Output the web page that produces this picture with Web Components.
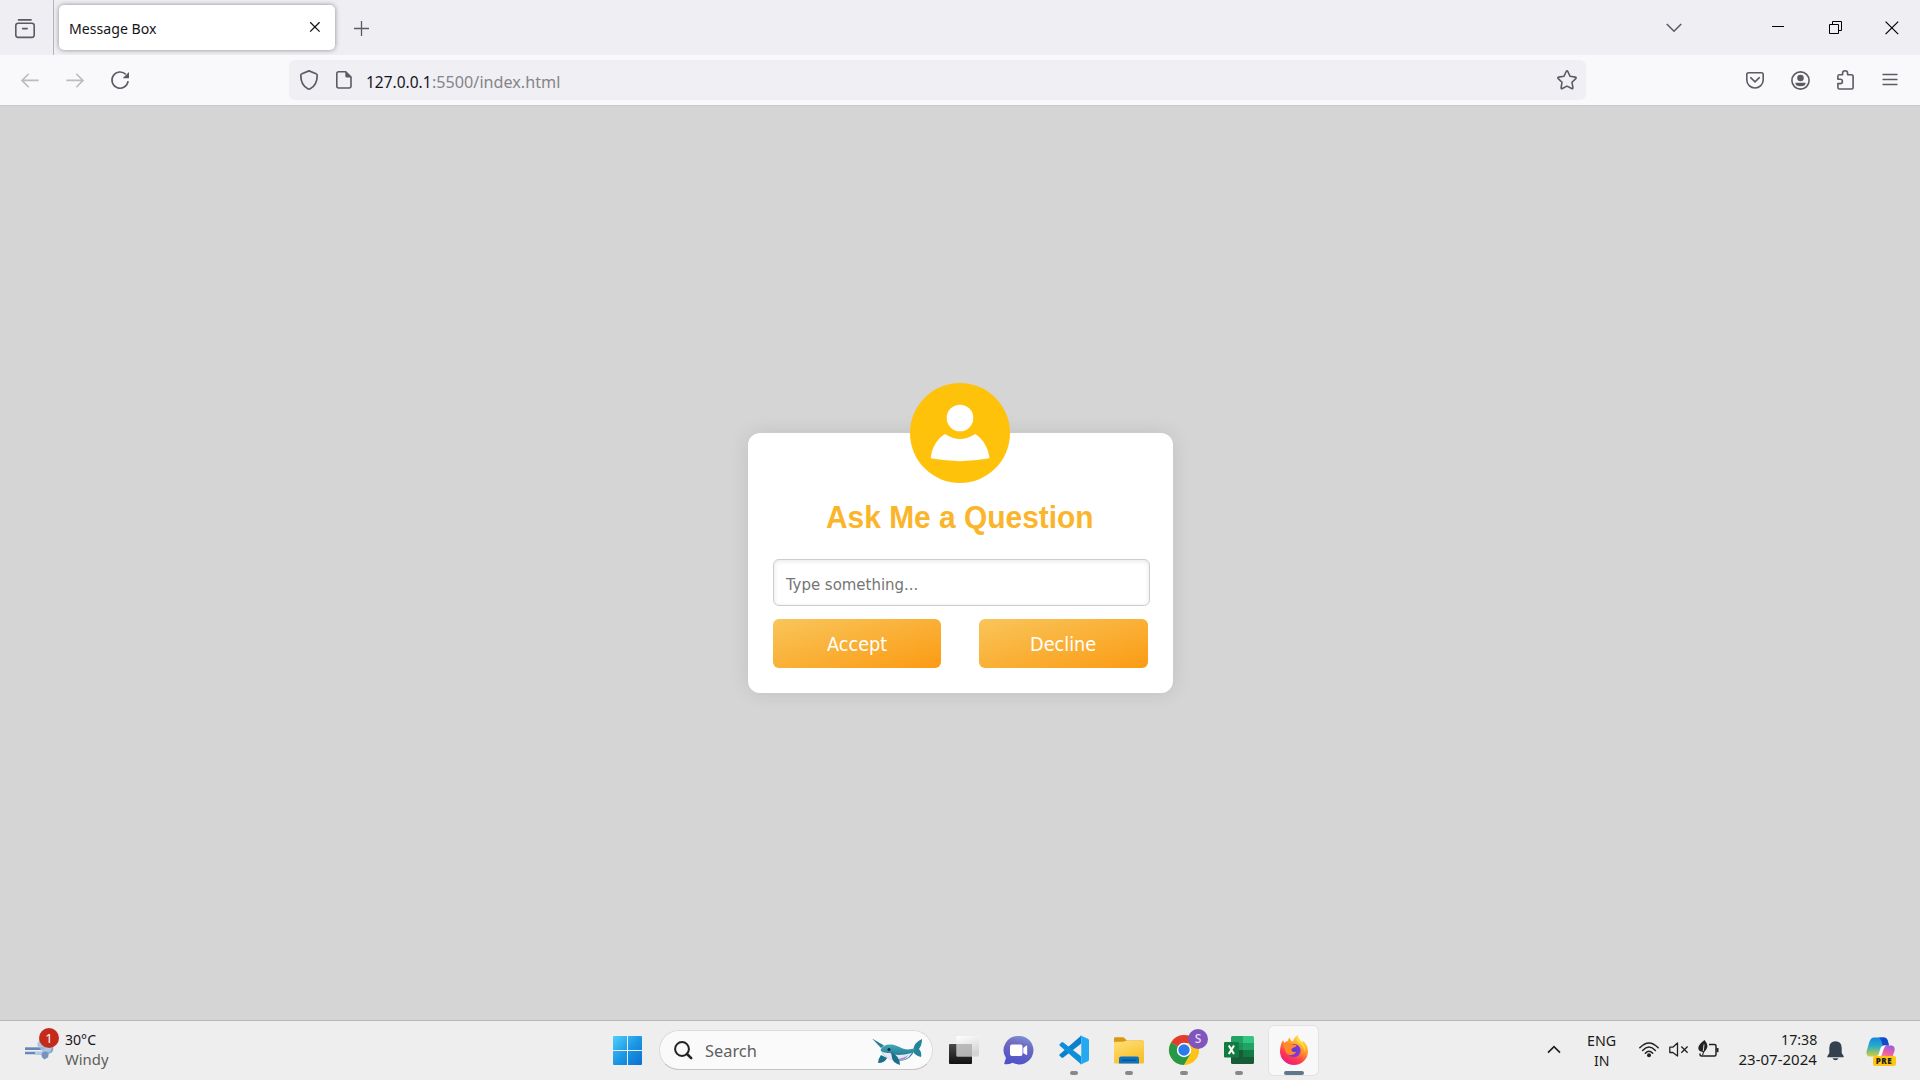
<!DOCTYPE html>
<html lang="en">
<head>
<meta charset="utf-8">
<title>Message Box</title>
<style>
html,body{margin:0;height:100%;overflow:hidden}
body{font-family:"Noto Sans",sans-serif;color:#15141a;background:#d5d5d5}
</style>
</head>
<body>
<desktop-screen></desktop-screen>
<script>
// name: [width, height, svg body]
const ICONS = {
  library:[20,20,'<g fill="none" stroke="#5b5b66" stroke-width="1.6" stroke-linecap="round"><path d="M3.5 .9h12.6"/><rect x=".8" y="4.2" width="18.4" height="14.2" rx="2.3"/><path d="M7.6 9.6h4.6"/></g>'],
  x:[12,12,'<path d="M1.2 1.2l9.4 9.4M10.6 1.2L1.2 10.6" stroke="#15141a" stroke-width="1.3" fill="none"/>'],
  plus:[15,15,'<path d="M7.5 0v15M0 7.5h15" stroke="#5b5b66" stroke-width="1.3"/>'],
  chevron:[16,10,'<path d="M.8 1l7.2 7.2L15.2 1" fill="none" stroke="#5b5b66" stroke-width="1.6"/>'],
  minimise:[12,2,'<path d="M0 .5h12" stroke="#000"/>'],
  restore:[13,13,'<path d="M.5 3.5h9v9h-9zM3.5 3.5v-3h9v9h-3" fill="none" stroke="#000"/>'],
  close:[14,14,'<path d="M.6 .6l12.6 12.6M13.2 .6L.6 13.2" stroke="#000" stroke-width="1.2"/>'],
  back:[18,15,'<path d="M17.6 7.4H1M7.7 .8L1 7.4l6.7 6.8" fill="none" stroke="#bbbbc0" stroke-width="1.6"/>'],
  forward:[18,15,'<path d="M.4 7.4H17M10.3 .8L17 7.4l-6.7 6.8" fill="none" stroke="#bbbbc0" stroke-width="1.6"/>'],
  reload:[19,19,'<path d="M17.1 10.2A8.1 8.1 0 1 1 14.8 3.4" fill="none" stroke="#5b5b66" stroke-width="1.6"/><path d="M18 .9v6.3h-6.3z" fill="#5b5b66"/>'],
  shield:[18,20,'<path d="M9 .9L1.9 3.7Q.8 4.1 .8 5.3C.8 12.500 3.300 16.500 7.800 18.800Q9 19.400 10.200 18.800C14.700 16.500 17.200 12.500 17.200 5.300Q17.200 4.100 16.100 3.700Z" fill="none" stroke="#5b5b66" stroke-width="1.7" stroke-linejoin="round"/>'],
  page:[16,18,'<path d="M9.700 .8H2.800Q.8 .8 .8 2.800v12.200q0 2 2 2h10.200q2 0 2-2V6.200z" fill="none" stroke="#5b5b66" stroke-width="1.6"/><path d="M9.300 .3v4.800q0 1.300 1.300 1.300h5z" fill="#5b5b66"/>'],
  star:[20,20,'<path d="M9.200 1.500q.8-1.300 1.600 0l2.300 4.800 5.200.8q1.500.3.500 1.500l-3.800 3.700.9 5.300q.1 1.500-1.200.9L10 16.100l-4.700 2.400q-1.300.6-1.200-.9l.9-5.300L1.200 8.600q-1-1.200.5-1.500l5.200-.8z" fill="none" stroke="#5b5b66" stroke-width="1.600" stroke-linejoin="round"/>'],
  pocket:[18,17,'<path d="M2.600 .8h12.800q1.800 0 1.800 1.800v5.500a8.200 7.900 0 0 1-16.400 0V2.600Q.8 .8 2.600 .8zM4.700 5.700L9 9.800l4.300-4.100" fill="none" stroke="#5b5b66" stroke-width="1.600" stroke-linecap="round" stroke-linejoin="round"/>'],
  account:[19,19,'<circle cx="9.500" cy="9.500" r="8.600" fill="none" stroke="#5b5b66" stroke-width="1.600"/><circle cx="9.500" cy="7" r="3.300" fill="#5b5b66"/><path d="M4.300 11.700h10.400q0 3.600-5.200 3.600t-5.200-3.600z" fill="#5b5b66"/>'],
  puzzle:[17,20,'<path d="M1.900 4.800h3.700V3.300a2.500 2.500 0 0 1 5 0v1.500h3.800q1.700 0 1.700 1.700v10.800q0 1.700-1.700 1.700H2.500Q.9 19 .9 17.300v-3.700h2.300a2.200 2.200 0 0 0 0-4.400H.9V6.500q0-1.700 1-1.700z" fill="none" stroke="#5b5b66" stroke-width="1.600" stroke-linejoin="round"/>'],
  menu:[16,14,'<path d="M.5 1.500h15M.5 6.500h15M.5 11.500h15" stroke="#5b5b66" stroke-width="1.300"/>'],
  avatar:[100,100,'<circle cx="50" cy="50" r="50" fill="#ffc20a"/><circle cx="50" cy="35" r="13.300" fill="#fff"/><path d="M35 51.100Q50 61 65.200 51.100C73 56 79 66 79.400 75.300Q50 81 20.800 75.300C21.300 66 27 55.500 35 51.100z" fill="#fff"/>'],
  weather:[30,24,'<defs><linearGradient id="w" x2="0" y2="1"><stop stop-color="#b5cdea"/><stop offset="1" stop-color="#6687b5"/></linearGradient></defs><g fill="none" stroke="url(#w)" stroke-width="2.600"><path d="M0 12.600h17q4-1 3-5t-6-3"/><path d="M0 17h20q8 0 7-6t-6-3"/><path d="M10 17.200h7q6 3 1.500 5.200"/></g><path d="M12 9q1-5 6-6l8 7q2 4-1 7l-6 .6-4-5z" fill="#a4bedd" opacity=".85"/><circle cx="20" cy="19" r="3.500" fill="#7494be"/>'],
  start:[29,29,'<defs><linearGradient id="s" x2="1" y2="1"><stop stop-color="#4fd0fb"/><stop offset=".5" stop-color="#1c98e4"/><stop offset="1" stop-color="#0a6fd0"/></linearGradient></defs><path d="M1 0h13v14H0V1Q0 0 1 0zM15 0h13q1 0 1 1v13H15zM0 15h14v14H1q-1 0-1-1zM15 15h14v13q0 1-1 1H15z" fill="url(#s)"/>'],
  search:[19,19,'<circle cx="8" cy="8" r="6.900" fill="none" stroke="#222" stroke-width="2"/><path d="M13 13l4.200 4.200" stroke="#222" stroke-width="2.600" stroke-linecap="round"/>'],
  narwhal:[50,28,'<defs><linearGradient id="n" x2="0" y2="1"><stop stop-color="#45a8b9"/><stop offset="1" stop-color="#126784"/></linearGradient></defs><path d="M0 .5L12 7.500 9 10z" fill="#257f95"/><path d="M9 17l6 3q-2 5-9 5 0-4 3-8z" fill="#1a6f8a"/><path d="M41 13Q42 4 50 1q0 6-3 10 3 3 2 8-7-2-8-6z" fill="#23849a"/><path d="M8.500 12Q11 6 19 6.500c9 .5 12 8 24 3.500Q40 23 25 23 13 22 8.500 12z" fill="url(#n)"/><path d="M9 13q3 2 9 2 6 4 22 0-5 8-15 8T9 13z" fill="#e9e6f3"/><path d="M21 22q12-2 15-5-3 6-11 6z" fill="#a493c9"/><path d="M19 14q9 4 9 13-7-2-8-7z" fill="#17718b"/><circle cx="17" cy="11.500" r="1.500" fill="#102a3a"/>'],
  taskview:[30,28,'<defs><linearGradient id="t" x2="0" y2="1"><stop stop-color="#4a4a4a"/><stop offset="1" stop-color="#111"/></linearGradient><linearGradient id="t2" x2=".4" y2="1"><stop stop-color="#fff"/><stop offset="1" stop-color="#d4d4d4"/></linearGradient></defs><rect y="8" width="23" height="20" rx="1" fill="url(#t)"/><rect x="7.500" width="22.500" height="20.500" rx="1" fill="url(#t2)"/><path d="M7.500 8H23v12.500H7.500z" fill="#a5a5a5" opacity=".7"/>'],
  chat:[30,29,'<defs><linearGradient id="c" x1=".8" x2=".5" y2="1"><stop stop-color="#7f95dc"/><stop offset=".35" stop-color="#706cc0"/><stop offset="1" stop-color="#4f52c9"/></linearGradient></defs><path d="M15 0a14.200 14.200 0 1 1-6.500 26.700Q4 29 .3 28 0 27.500 2 22A14.200 14.200 0 0 1 15 0z" fill="url(#c)"/><rect x="6" y="8.500" width="12.500" height="11.500" rx="2" fill="#fff"/><path d="M19.300 12l2.700-2.300q1.200-.5 1.200 1v7.200q0 1.500-1.200.9L19.300 17z" fill="#fff"/>'],
  vscode:[30,30,'<path d="M22.300 .5L.8 19.300q-1 .9 0 1.800l1.700 1.500q.8.600 1.800 0L22.300 8.600z" fill="#0a7fcb"/><path d="M22.300 29.500L.8 10.700q-1-.9 0-1.800l1.700-1.500q.8-.6 1.800 0l18 14z" fill="#0d8ed8"/><path d="M21 .2l8 3.500q1 .6 1 1.800v19q0 1.200-1 1.800l-8 3.500q1.300-.8 1.300-2.500V2.700q0-1.600-1.300-2.500z" fill="#27a9f2"/>'],
  folder:[30,27,'<defs><linearGradient id="f" x2=".5" y2="1"><stop stop-color="#ffe07a"/><stop offset="1" stop-color="#f9c02a"/></linearGradient></defs><path d="M0 8V1.500Q0 .3 1.200 .3h7.600q1 0 1.800.9L13 3.500h15.500Q30 3.500 30 5v5H0z" fill="#d9980f"/><path d="M0 6q0-1.200 1.200-1.200H9l4-1.300h15.500Q30 3.500 30 5v20.500q0 1-1 1H1q-1 0-1-1z" fill="url(#f)"/><path d="M5 26.500v-5Q5 19.500 7 19.500h16q2 0 2 2v5z" fill="#0d72c2"/><path d="M8 23.200h14" stroke="#0a4f94" stroke-width="1.300"/>'],
  chrome:[30,30,'<circle cx="15" cy="15" r="15" fill="#fcc419"/><path d="M15 15L2 7.500a15 15 0 0 1 26 0z" fill="#e23c2e"/><path d="M15 15L2 7.500A15 15 0 0 0 15 30l6.500-11.200z" fill="#279847"/><path d="M15 8h13.200q1.800 3.500 1.800 7A15 15 0 0 1 15 30l7-11z" fill="#fcc419"/><circle cx="15" cy="15" r="7.200" fill="#fff"/><circle cx="15" cy="15" r="5.700" fill="#2a7aea"/>'],
  excel:[30,28,'<path d="M8.500 0H19v14H7V1.500Q7 0 8.500 0z" fill="#22a366"/><path d="M19 0h9.500Q30 0 30 1.500V7H19z" fill="#33c481"/><path d="M7 7h12v7H7z" fill="#21905a"/><path d="M19 7h11v7H19z" fill="#22a366"/><path d="M7 14h12v7H7z" fill="#185c37"/><path d="M19 14h11v7H19z" fill="#107c41"/><path d="M7 21h23v5.500q0 1.500-1.500 1.500h-20Q7 28 7 26.500z" fill="#185c37"/><rect y="6" width="15" height="15.500" rx="1.200" fill="#107c41"/><path d="M4.800 9.500l5.200 8.500M10 9.500L4.800 18" stroke="#fff" stroke-width="2.100"/>'],
  firefox:[28,30,'<defs><linearGradient id="ff" x1=".8" x2=".25" y2="1"><stop stop-color="#fff04a"/><stop offset=".4" stop-color="#ff9a2a"/><stop offset=".72" stop-color="#ff3a4f"/><stop offset="1" stop-color="#e5188a"/></linearGradient><radialGradient id="fp"><stop stop-color="#5b3fd0"/><stop offset="1" stop-color="#8c35cf"/></radialGradient></defs><path d="M3 5q.5 2 1.500 3 1-1.500 3-2Q8 3.500 10 2.500q0 3 3 4 .5-3.500 4.500-6.500.5 4 5 7.500.5-.5.2-2Q28 10 28 16.500A14 13.400 0 0 1 0 16.500Q0 10 3 5z" fill="url(#ff)"/><circle cx="14" cy="15.500" r="6.600" fill="url(#fp)"/><path d="M3.500 9Q9 7 12 9.500q2 .3 4.500.8-.5 2-3.500 2.500-2 1-1.500 3 2 2 5 .7-2.500 4-6.500 3.500-5-1-5-6Q3 12 3.500 9z" fill="#ff8a2c"/><path d="M17.500 0q.5 4 5 7.500Q26 11 25 17q-1.500-7-7-9.500-2.500-3.500-.5-7.500z" fill="#ffdc3e"/>'],
  up:[14,9,'<path d="M1 7.700l6-6 6 6" fill="none" stroke="#222" stroke-width="1.700"/>'],
  wifi:[20,16,'<g fill="none" stroke="#222" stroke-width="1.500" stroke-linecap="round"><path d="M.8 5.800q9.200-9.800 18.400 0M3.600 8.500q6.400-6.800 12.800 0M6.300 11.200q3.700-3.800 7.400 0"/></g><circle cx="10" cy="13.200" r="2" fill="#222"/>'],
  mute:[20,16,'<path d="M.8 5.200h3L8.500 1v13L3.800 10.500h-3z" fill="none" stroke="#222" stroke-width="1.300" stroke-linejoin="round"/><path d="M12.300 4.500l6.300 6.300M18.600 4.500l-6.300 6.300" stroke="#222" stroke-width="1.300"/>'],
  battery:[21,18,'<path d="M11 4.500h5.500q1.500 0 1.500 1.500v8.500q0 1.500-1.500 1.500H3.500Q2 16 2 14.500v-1" fill="none" stroke="#222" stroke-width="1.500"/><path d="M18.500 8h2v4.200h-2z" fill="#222"/><path d="M6.500 0q3 3.500 3 6t-3.600 6.500l-.7 2.500H4L5 12Q.3 11.500.3 8T6.500 0z" fill="#222"/><path d="M6 4.500L5.300 11" stroke="#eee" stroke-width=".9"/>'],
  bell:[17,20,'<path d="M8.500 .2Q14.700 .4 14.700 7v5l2 3.200v1H.3v-1L2.300 12V7Q2.300 .4 8.500 .2zM5.500 17.200h6q-.8 2-3 2t-3-2z" fill="#33414e"/>'],
  copilot:[30,30,'<defs><linearGradient id="k" x2="0" y2="1"><stop stop-color="#1686e0"/><stop offset=".45" stop-color="#28adc9"/><stop offset="1" stop-color="#d6cf36"/></linearGradient><linearGradient id="k2" x1=".7" x2=".3" y2="1"><stop stop-color="#9b5de5"/><stop offset=".6" stop-color="#ee5fa5"/><stop offset="1" stop-color="#ff9565"/></linearGradient></defs><path d="M8 .5h10q3 0 4 4l1 4h-5q-3 0-4 4l-1.500 5q-1 2-4 2H4q-4 0-3.500-5L3.500 4.500Q5 .5 8 .5z" fill="url(#k)"/><path d="M13 .5h5q3 0 4 4l1 4h-6.500q-1-6-3.500-8z" fill="#1649c5"/><path d="M18 8.500h7.500q4 .5 3 5.500l-2 5.500q-1 1-3 1H11q2-.5 3-4l1.500-5q.8-3 2.500-3z" fill="url(#k2)"/><path d="M18 8.500h2q-1.500 1-2.500 4l-2 6q-.8 2-3 2H10q2.500 0 3.500-4l1.500-5q1-3 3-3z" fill="#fff"/>']
};

function define(name, markup, setup) {
  customElements.define(name, class extends HTMLElement {
    constructor() {
      super();
      const t = document.createElement('template');
      t.innerHTML = typeof markup === 'function' ? markup(this) : markup;
      this.attachShadow({mode:'open'}).append(t.content.cloneNode(true));
    }
    connectedCallback() { if (setup) setup(this, this.shadowRoot); }
  });
}

define('ui-icon', '<style>:host{display:block;flex:none}svg{display:block;overflow:visible}</style><div></div>', (el, root) => {
  const icon = ICONS[el.getAttribute('name')];
  if (!icon) return;
  const [w, h, body] = icon;
  root.querySelector('div').innerHTML = `<svg width="${w}" height="${h}" viewBox="0 0 ${w} ${h}" aria-hidden="true">${body}</svg>`;
});

// One line of text condensed or widened to an exact width.
define('fit-text', '<style>:host{display:block;flex:none;line-height:20px;height:20px;white-space:nowrap}span{display:inline-block;transform-origin:0 50%}</style><span><slot></slot></span>', (el, root) => {
  const w = +el.getAttribute('w');
  el.style.width = w + 'px';
  el.style.fontSize = el.getAttribute('size') + 'px';
  const span = root.querySelector('span');
  span.style.transform = `scaleX(${w / span.offsetWidth})`;
});

define('browser-tab', `<style>
:host{display:flex;flex:none;box-sizing:border-box;width:276px;height:45px;border-radius:5px;background:#fff;box-shadow:0 0 5px rgba(0,0,0,.42);align-items:flex-start;padding:13px 14.500px 0 10px;justify-content:space-between}
ui-icon{margin-top:3px}</style><slot></slot><ui-icon name="x"></ui-icon>`);

define('tab-strip', `<style>
:host{display:flex;align-items:flex-start;height:55px;background:#efeef3}
.sep{width:1px;height:55px;background:#b4b3bb;margin:0 5px 0 18px}</style>
<ui-icon name="library" style="margin:19px 0 0 15px"></ui-icon><div class="sep"></div>
<browser-tab style="margin-top:5px"><fit-text w="87.500" size="14.700">Message Box</fit-text></browser-tab>
<ui-icon name="plus" style="margin:21px 0 0 19px"></ui-icon>
<ui-icon name="chevron" style="margin:23px 0 0 auto"></ui-icon>
<ui-icon name="minimise" style="margin:26px 0 0 90px"></ui-icon>
<ui-icon name="restore" style="margin:21px 0 0 45px"></ui-icon>
<ui-icon name="close" style="margin:20.500px 21px 0 43px"></ui-icon>`);

define('address-bar', `<style>
:host{display:flex;flex:none;box-sizing:border-box;width:1297px;height:40px;border-radius:6px;background:#f0eff4;padding:0 9px 0 11px;align-items:flex-start;margin-top:5px}
.rest{color:#858589}</style>
<ui-icon name="shield" style="margin-top:10px"></ui-icon><ui-icon name="page" style="margin:11px 0 0 18px"></ui-icon>
<fit-text w="65.500" size="17" style="margin:11.500px 0 0 14px">127.0.0.1</fit-text><fit-text class="rest" w="128.500" size="17" style="margin-top:11.500px">:5500/index.html</fit-text>
<ui-icon name="star" style="margin:10px 0 0 auto"></ui-icon>`);

define('nav-bar', `<style>:host{display:flex;align-items:flex-start;height:50px;background:#f9f9fb;border-bottom:1px solid #c9c9cd}</style>
<ui-icon name="back" style="margin:18px 0 0 21px"></ui-icon><ui-icon name="forward" style="margin:18px 0 0 27px"></ui-icon>
<ui-icon name="reload" style="margin:16px 159px 0 27px"></ui-icon><address-bar></address-bar>
<ui-icon name="pocket" style="margin:17px 0 0 160px"></ui-icon><ui-icon name="account" style="margin:16px 0 0 27px"></ui-icon>
<ui-icon name="puzzle" style="margin:15px 0 0 27px"></ui-icon><ui-icon name="menu" style="margin:18px 0 0 28px"></ui-icon>`);

define('gold-button', `<style>:host{display:block;flex:none}
button{display:flex;justify-content:center;align-items:flex-start;width:100%;height:49px;border:0;border-radius:6px;padding:15px 0 0;color:#fff;font-family:"DejaVu Sans Condensed","Noto Sans",sans-serif;background:linear-gradient(to bottom right,#f9c55a,#fb9b13)}</style><button><slot></slot></button>`);

define('message-box', `<style>
:host{display:flex;flex-direction:column;box-sizing:border-box;width:425px;height:260px;border-radius:12px;background:#fff;box-shadow:0 0 20px rgba(0,0,0,.1);padding:0 23px 0 25px}
.avatar{align-self:center;margin:-50px 0 0 -2px}
h1{margin:17px 0 0 53px;height:36px;font:bold 30px "Liberation Sans",Arial,sans-serif;color:#fab52b}
.field{box-sizing:border-box;width:377px;height:47px;margin-top:23px;border:1px solid #ccc;border-radius:6px;box-shadow:inset 0 1px 5px rgba(0,0,0,.1);padding:15px 12px 0;color:#757575;font-family:"DejaVu Sans Condensed","Noto Sans",sans-serif}
.actions{display:flex;justify-content:space-between;margin:13px 2px 0 0}</style>
<ui-icon class="avatar" name="avatar"></ui-icon>
<h1><fit-text w="268" size="30.700" style="line-height:36px;height:36px">Ask Me a Question</fit-text></h1>
<div class="field"><fit-text w="132" size="16.500">Type something...</fit-text></div>
<div class="actions"><gold-button style="width:168px"><fit-text w="60" size="20.300">Accept</fit-text></gold-button>
<gold-button style="width:169px"><fit-text w="66" size="20.300">Decline</fit-text></gold-button></div>`);

define('web-page', `<style>:host{display:flex;justify-content:center;align-items:flex-start;box-sizing:border-box;height:914px;padding-top:327px;background:#d5d5d5}</style><message-box></message-box>`);

define('weather-widget', `<style>:host{display:flex;flex:none;width:120px;height:59px;position:relative}
.txt{margin:7.500px 0 0 10px}.w{color:#5d5d5d}
.badge{position:absolute;left:14px;top:7px;width:20px;height:20px;border-radius:50%;background:#c42b1c;color:#fff;text-align:center;font-size:13px;line-height:20px}</style>
<ui-icon name="weather" style="margin:15px 0 0 0"></ui-icon><div class="txt"><fit-text w="31" size="15">30°C</fit-text><fit-text class="w" w="43.500" size="15">Windy</fit-text></div><div class="badge">1</div>`);

define('search-pill', `<style>:host{display:flex;flex:none;box-sizing:border-box;width:274px;height:40px;border-radius:20px;background:#fafafa;border:1px solid #dcdcdc;border-bottom-color:#c4c4c4;align-items:flex-start;padding:0 10px 0 14px;color:#5f5f5f}</style>
<ui-icon name="search" style="margin-top:10px"></ui-icon><fit-text w="52" size="17" style="margin:10px 0 0 12px">Search</fit-text><ui-icon name="narwhal" style="margin:7px 0 0 auto"></ui-icon>`);

define('task-app', el => `<style>:host{display:flex;flex:none;flex-direction:column;align-items:center;justify-content:flex-end;box-sizing:border-box;width:49px;height:49px;position:relative;margin:5px 3px 0;border-radius:5px}
.slot{height:30px;display:flex;align-items:center;margin-bottom:10px}
.dot{position:absolute;bottom:0;width:8px;height:4px;border-radius:2px;background:#888;display:none}
:host([open]) .dot{display:block}
:host([active]){background:#f8f8f8;box-shadow:0 0 0 1px #e3e3e3}:host([active]) .dot{width:20px;background:#60798a}
::slotted(b){position:absolute;left:29px;top:3px;width:20px;height:20px;border-radius:50%;background:#8055bd;color:#e5dcf2;font-size:12px;font-weight:500;line-height:20px;text-align:center}</style>
<div class="slot"><ui-icon name="${el.getAttribute('icon')}"></ui-icon></div><slot></slot><div class="dot"></div>`);

define('system-tray', `<style>:host{display:flex;flex:none;align-items:flex-start;height:59px;color:#1b1b1b}
.col{display:flex;flex-direction:column;margin-top:8.500px}.c{align-items:center}.r{align-items:flex-end;margin-top:7.500px}
.cp{position:relative;margin:16px 24.500px 0 22px}
.pre{position:absolute;left:7px;top:19px;width:23px;height:10px;border-radius:2px;background:#ffc714;color:#222;font-weight:900;font-size:8px;line-height:10px;text-align:center;letter-spacing:.5px}</style>
<ui-icon name="up" style="margin:24px 0 0 0"></ui-icon>
<div class="col c" style="margin-left:26px"><fit-text w="29.500" size="15">ENG</fit-text><fit-text w="16" size="15">IN</fit-text></div>
<ui-icon name="wifi" style="margin:21px 0 0 22px"></ui-icon><ui-icon name="mute" style="margin:21px 0 0 10px"></ui-icon><ui-icon name="battery" style="margin:19px 0 0 9px"></ui-icon>
<div class="col r" style="margin-left:20px"><fit-text w="36" size="15">17:38</fit-text><fit-text w="78" size="15">23-07-2024</fit-text></div>
<ui-icon name="bell" style="margin:20px 0 0 10px"></ui-icon><div class="cp"><ui-icon name="copilot"></ui-icon><div class="pre">PRE</div></div>`);

define('task-bar', `<style>:host{display:flex;align-items:flex-start;height:59px;background:#eee;border-top:1px solid #b9b9b9}</style>
<weather-widget style="margin-left:25px"></weather-widget>
<ui-icon name="start" style="margin:15px 0 0 468px"></ui-icon>
<search-pill style="margin:9px 3px 0 17px"></search-pill>
<task-app icon="taskview"></task-app><task-app icon="chat"></task-app><task-app icon="vscode" open></task-app><task-app icon="folder" open></task-app>
<task-app icon="chrome" open><b>S</b></task-app><task-app icon="excel" open></task-app><task-app icon="firefox" open active></task-app>
<system-tray style="margin-left:auto"></system-tray>`);

define('desktop-screen', `<style>:host{display:flex;flex-direction:column;width:1920px;height:1080px;overflow:hidden}:host>*{flex:none}</style>
<tab-strip></tab-strip><nav-bar></nav-bar><web-page></web-page><task-bar></task-bar>`);
</script>
</body>
</html>
